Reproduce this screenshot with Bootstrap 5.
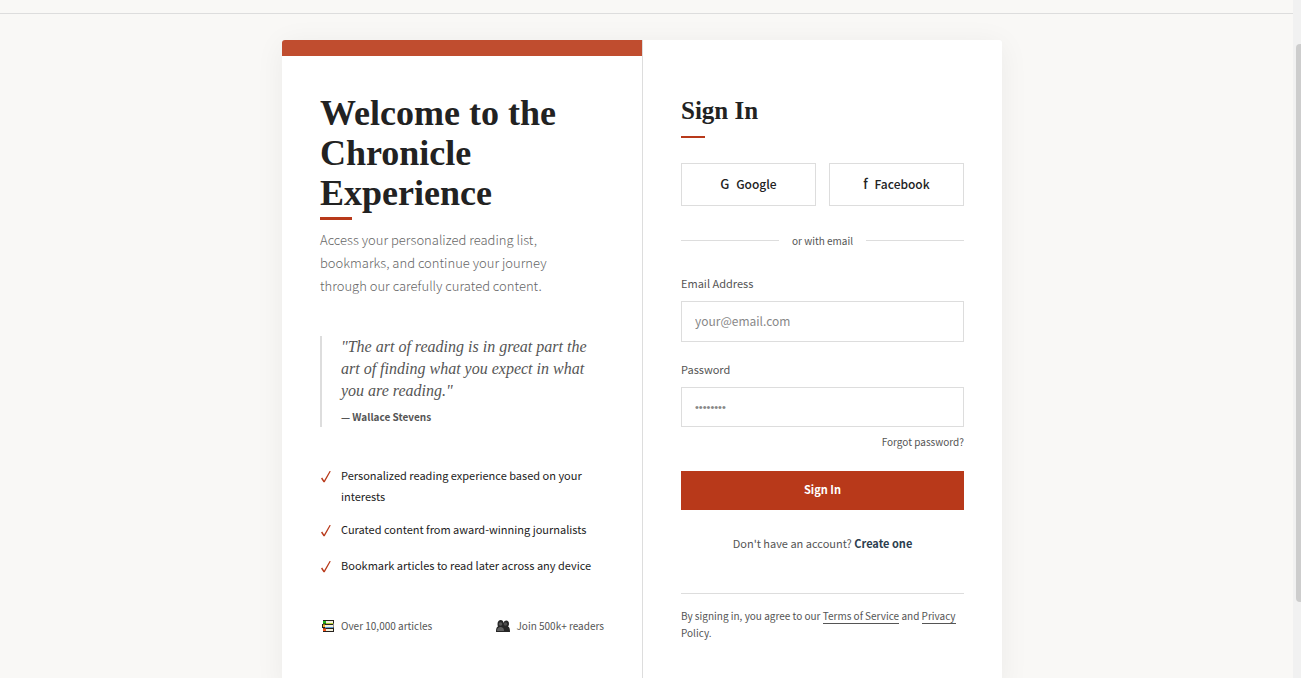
<!DOCTYPE html>
<html lang="en">
<head>
<meta charset="utf-8">
<meta name="viewport" content="width=device-width, initial-scale=1">
<title>Sign In</title>
<link href="https://cdn.jsdelivr.net/npm/bootstrap@5.3.0/dist/css/bootstrap.min.css" rel="stylesheet">
<style>
:root { --accent: #b8391a; --ink: #222; --soft: #555; --rule: #ddd; --paper: #f9f8f6; }
body { background: var(--paper); color: var(--ink); font: 11px/21px "Noto Sans CJK SC", sans-serif; }
.topline { height: 14px; border-bottom: 1px solid var(--rule); }
.main-area { padding: 26px 9px 48px 0; }
.auth-panel { width: 100%; max-width: 720px; background: #fff; border-radius: 3px; box-shadow: 0 4px 30px rgba(0,0,0,.06); }
.intro { flex: 0 0 calc(50% + 1px); border-right: 1px solid var(--rule); }
.intro-band { height: 16px; background: #c04d2f; border-top-left-radius: 3px; }
.intro-body { padding: 37px 38px 48px; }
.form-side { flex: 1; padding: 54px 38px 48px; }
.serif-face { font-family: "Liberation Serif", serif; }
.hero-title { font-size: 36px; line-height: 40px; font-weight: 700; margin: 0 0 4px; }
.dash { width: 24px; height: 2px; background: var(--accent); }
.hero-title + .dash { width: 32px; height: 3px; }
.intro-text { font-size: 13px; line-height: 23px; font-weight: 300; color: #666; margin: 8px 0 39px; max-width: 240px; }
.pull-quote { border-left: 2px solid var(--rule); padding-left: 19px; color: var(--soft); margin: 0 0 38px; }
.pull-quote p { font-size: 16px; line-height: 22px; font-style: italic; margin: 0; }
.pull-quote footer { font-size: 10px; line-height: 20px; padding-top: 5px; font-weight: 700; }
.perks { row-gap: 12px; }
.perks li { min-height: 24px; gap: 10px; }
.perks svg { width: 11px; height: 14px; margin-top: 5px; flex: none; }
.stats { margin-top: 36px; font-size: 10px; color: var(--soft); }
.stats svg { width: 14px; height: 14px; margin-right: 7px; }
.form-title { font-size: 25px; line-height: 34px; font-weight: 700; margin: 0 0 8px; }
.socials { gap: 13px; margin-top: 25px; }
.social-btn { border: 1px solid var(--rule); border-radius: 0; font-size: 12px; line-height: 21px; font-weight: 500; padding: 9px 10px 11px; color: var(--ink); }
.social-btn span { font-size: 13px; }
.or-row { gap: 13px; margin: 24px 0 22px; font-size: 10px; color: var(--soft); }
.or-row::before, .or-row::after { content: ""; flex: 1; border-top: 1px solid var(--rule); }
.field-label { display: block; color: var(--soft); margin-bottom: 7px; }
.field-box { border: 1px solid var(--rule); border-radius: 0; font-size: 12px; line-height: 21px; padding: 8px 13px 10px; }
.field-box::placeholder { color: #888; }
.field-box[type="password"] { font-family: "Liberation Sans", sans-serif; font-size: 11px; line-height: 20px; padding: 9px 13px; }
.field { margin-bottom: 17px; }
.forgot-row { margin: 4px 0 19px; font-size: 10px; }
.forgot-row a { color: var(--soft); }
.submit-btn { background: var(--accent); color: #fff; border: 0; border-radius: 0; font-size: 11px; line-height: 21px; font-weight: 700; padding: 8px 9px 10px; }
.signup { color: var(--soft); margin: 23px 0 39px; }
.signup a { color: #2c3e50; font-weight: 700; }
.legal { border-top: 1px solid var(--rule); padding-top: 13px; font-size: 10px; line-height: 17px; color: var(--soft); margin: 0; }
.legal a { color: inherit; }
.lined { border-bottom: 1px solid var(--soft); }
.scroll-rail { width: 8px; background: #f1f1f1; padding: 44px 0 0 3px; }
.scroll-grip { height: 88%; background: #cdcdcd; border-radius: 4px 0 0 4px; }
</style>
</head>
<body>
<div class="d-flex vh-100 overflow-hidden">
  <div class="flex-grow-1">
    <header class="topline"></header>
    <main class="main-area d-flex justify-content-center">
      <div class="auth-panel d-flex">
        <section class="intro">
          <div class="intro-band"></div>
          <div class="intro-body">
            <h1 class="hero-title serif-face">Welcome to the Chronicle Experience</h1>
            <div class="dash"></div>
            <p class="intro-text">Access your personalized reading list, bookmarks, and continue your journey through our carefully curated content.</p>
            <blockquote class="pull-quote">
              <p class="serif-face">"The art of reading is in great part the<br>art of finding what you expect in what<br>you are reading."</p>
              <footer>— Wallace Stevens</footer>
            </blockquote>
            <ul class="perks list-unstyled d-grid mb-0">
              <li class="d-flex"><svg viewBox="0 0 11 14"><path d="M1 8.500 2.200 7.600 4.100 10.500 9.600 1 10.800 1.200 4.700 12.300H3.500z" fill="#b8391a"/></svg><span>Personalized reading experience based on your interests</span></li>
              <li class="d-flex"><svg viewBox="0 0 11 14"><path d="M1 8.500 2.200 7.600 4.100 10.500 9.600 1 10.800 1.200 4.700 12.300H3.500z" fill="#b8391a"/></svg><span>Curated content from award-winning journalists</span></li>
              <li class="d-flex"><svg viewBox="0 0 11 14"><path d="M1 8.500 2.200 7.600 4.100 10.500 9.600 1 10.800 1.200 4.700 12.300H3.500z" fill="#b8391a"/></svg><span>Bookmark articles to read later across any device</span></li>
            </ul>
            <div class="stats d-flex justify-content-between">
              <div class="d-flex align-items-center"><svg viewBox="0 0 14 14"><path d="M3 1h11v3.500h-.5v4h.5V13H3V9H2V5h1V2z" fill="#26221f"/><path d="M6 2h7v2H6zM5 6h8v2H5zM6 10h7v2H6z" fill="#f4f1dc"/><path d="M3 2h3v2.500H3z" fill="#20b51c"/><path d="M3 5.500h2v2.500H3z" fill="#f1b52c"/><path d="M3 9.500h3V12H3z" fill="#f2501b"/><path d="M6 4h7v1H6z" fill="#b4cf35"/><path d="M5 8h8v1H5z" fill="#5b9bd9"/></svg><span>Over 10,000 articles</span></div>
              <div class="d-flex align-items-center"><svg viewBox="0 0 14 14"><path d="M1.500 5c0-5 6-5 6-1 1-4 6-3 5.500 1 0 1-.5 2-1 2.500 1.500.5 2 2 2 5.500H0c0-3.500.5-5 2-5.500-.3-.5-.5-1.500-.5-2.500z" fill="#252525"/><circle cx="4.500" cy="5" r="1.800" fill="#555"/><circle cx="9.500" cy="5" r="1.800" fill="#4c4c4c"/><path d="M1 12c0-3 1.500-4 3.500-4S8 9 8 12z" fill="#606060"/></svg><span>Join 500k+ readers</span></div>
            </div>
          </div>
        </section>
        <section class="form-side">
          <h2 class="form-title serif-face">Sign In</h2>
          <div class="dash"></div>
          <div class="socials d-flex">
            <button type="button" class="btn social-btn flex-fill w-50"><span class="me-1">G</span> Google</button>
            <button type="button" class="btn social-btn flex-fill w-50"><span class="me-1">f</span> Facebook</button>
          </div>
          <div class="or-row d-flex align-items-center">or with email</div>
          <form>
            <div class="field">
              <label class="field-label" for="email">Email Address</label>
              <input class="form-control field-box" type="email" id="email" placeholder="your@email.com">
            </div>
            <div>
              <label class="field-label" for="password">Password</label>
              <input class="form-control field-box" type="password" id="password" placeholder="••••••••">
            </div>
            <div class="forgot-row text-end"><a class="text-decoration-none" href="#">Forgot password?</a></div>
            <button type="submit" class="btn submit-btn w-100">Sign In</button>
          </form>
          <p class="signup text-center">Don't have an account? <a class="text-decoration-none" href="#">Create one</a></p>
          <p class="legal">By signing in, you agree to our <a class="text-decoration-none lined" href="#">Terms of Service</a> and <a class="text-decoration-none" href="#"><span class="lined">Privacy</span> Policy</a>.</p>
        </section>
      </div>
    </main>
  </div>
  <div class="scroll-rail" aria-hidden="true"><div class="scroll-grip"></div></div>
</div>
<script src="https://cdn.jsdelivr.net/npm/bootstrap@5.3.0/dist/js/bootstrap.bundle.min.js"></script>
</body>
</html>
